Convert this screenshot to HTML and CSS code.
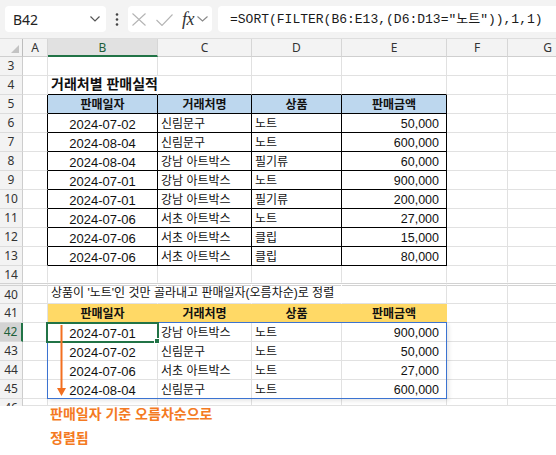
FILE: index.html
```html
<!DOCTYPE html>
<html lang="ko">
<head>
<meta charset="utf-8">
<title>SORT FILTER</title>
<link rel="stylesheet" href="styles.css">
</head>
<body>
<div class="app">
  <div class="toolbar">
    <div class="namebox">
      <span>B42</span>
      <svg class="chev" width="10" height="6" viewBox="0 0 10 6"><polyline points="0.5,0.5 5,5 9.5,0.5" fill="none" stroke="#555" stroke-width="1.2"/></svg>
    </div>
    <div class="more">
      <svg width="4" height="13" viewBox="0 0 4 13"><circle cx="2" cy="1.5" r="1.3" fill="#444"/><circle cx="2" cy="6.5" r="1.3" fill="#444"/><circle cx="2" cy="11.5" r="1.3" fill="#444"/></svg>
    </div>
    <div class="fxbox">
      <svg class="x" width="14" height="13" viewBox="0 0 14 13"><path d="M0.5,0.5 L13.5,12.5 M13.5,0.5 L0.5,12.5" stroke="#b4b4b4" stroke-width="1.1" fill="none"/></svg>
      <svg class="ok" width="17" height="12" viewBox="0 0 17 12"><polyline points="0.5,6 6,11.5 16.5,0.5" stroke="#b4b4b4" stroke-width="1.1" fill="none"/></svg>
      <span class="fx">fx</span>
      <svg class="chev2" width="11" height="6" viewBox="0 0 11 6"><polyline points="0.5,0.5 5.5,5 10.5,0.5" fill="none" stroke="#888" stroke-width="1.1"/></svg>
    </div>
    <div class="formula">=SORT(FILTER(B6:E13,(D6:D13="노트")),1,1)</div>
  </div>

  <div class="sheet">
    <div class="corner"><i class="tri"></i></div>
    <div class="ch">A</div><div class="ch sel">B</div><div class="ch">C</div><div class="ch">D</div><div class="ch">E</div><div class="ch">F</div><div class="ch">G</div>

    <div class="rh">3</div><div class="c"></div><div class="c"></div><div class="c"></div><div class="c"></div><div class="c"></div><div class="c"></div><div class="c"></div>

    <div class="rh">4</div><div class="c"></div><div class="c bt nr title">거래처별 판매실적</div><div class="c bt"></div><div class="c bt"></div><div class="c bt"></div><div class="c"></div><div class="c"></div>

    <div class="rh">5</div><div class="c bl"></div><div class="c bk hb">판매일자</div><div class="c bk hb">거래처명</div><div class="c bk hb">상품</div><div class="c bk hb">판매금액</div><div class="c"></div><div class="c"></div>

    <div class="rh">6</div><div class="c bl"></div><div class="c bk date">2024-07-02</div><div class="c bk">신림문구</div><div class="c bk">노트</div><div class="c bk num">50,000</div><div class="c"></div><div class="c"></div>
    <div class="rh">7</div><div class="c bl"></div><div class="c bk date">2024-08-04</div><div class="c bk">신림문구</div><div class="c bk">노트</div><div class="c bk num">600,000</div><div class="c"></div><div class="c"></div>
    <div class="rh">8</div><div class="c bl"></div><div class="c bk date">2024-08-04</div><div class="c bk">강남 아트박스</div><div class="c bk">필기류</div><div class="c bk num">60,000</div><div class="c"></div><div class="c"></div>
    <div class="rh">9</div><div class="c bl"></div><div class="c bk date">2024-07-01</div><div class="c bk">강남 아트박스</div><div class="c bk">노트</div><div class="c bk num">900,000</div><div class="c"></div><div class="c"></div>
    <div class="rh">10</div><div class="c bl"></div><div class="c bk date">2024-07-01</div><div class="c bk">강남 아트박스</div><div class="c bk">필기류</div><div class="c bk num">200,000</div><div class="c"></div><div class="c"></div>
    <div class="rh">11</div><div class="c bl"></div><div class="c bk date">2024-07-06</div><div class="c bk">서초 아트박스</div><div class="c bk">노트</div><div class="c bk num">27,000</div><div class="c"></div><div class="c"></div>
    <div class="rh">12</div><div class="c bl"></div><div class="c bk date">2024-07-06</div><div class="c bk">서초 아트박스</div><div class="c bk">클립</div><div class="c bk num">15,000</div><div class="c"></div><div class="c"></div>
    <div class="rh">13</div><div class="c bl"></div><div class="c bk date">2024-07-06</div><div class="c bk">서초 아트박스</div><div class="c bk">클립</div><div class="c bk num">80,000</div><div class="c"></div><div class="c"></div>

    <div class="rh nb">14</div><div class="c nb"></div><div class="c nb"></div><div class="c nb"></div><div class="c nb"></div><div class="c nb"></div><div class="c nb"></div><div class="c nb"></div>

    <div class="rh dbl">40</div><div class="c dbl"></div><div class="c dbl nr">상품이 '노트'인 것만 골라내고 판매일자(오름차순)로 정렬</div><div class="c dbl nr"></div><div class="c dbl nr"></div><div class="c dbl"></div><div class="c dbl"></div><div class="c dbl"></div>

    <div class="rh">41</div><div class="c"></div><div class="c hy">판매일자</div><div class="c hy">거래처명</div><div class="c hy">상품</div><div class="c hy">판매금액</div><div class="c"></div><div class="c"></div>

    <div class="rh sel">42</div><div class="c"></div><div class="c date">2024-07-01</div><div class="c">강남 아트박스</div><div class="c">노트</div><div class="c num">900,000</div><div class="c"></div><div class="c"></div>
    <div class="rh">43</div><div class="c"></div><div class="c date">2024-07-02</div><div class="c">신림문구</div><div class="c">노트</div><div class="c num">50,000</div><div class="c"></div><div class="c"></div>
    <div class="rh">44</div><div class="c"></div><div class="c date">2024-07-06</div><div class="c">서초 아트박스</div><div class="c">노트</div><div class="c num">27,000</div><div class="c"></div><div class="c"></div>
    <div class="rh">45</div><div class="c"></div><div class="c date">2024-08-04</div><div class="c">신림문구</div><div class="c">노트</div><div class="c num">600,000</div><div class="c"></div><div class="c"></div>

    <div class="rh last">46</div><div class="c"></div><div class="c"></div><div class="c"></div><div class="c"></div><div class="c"></div><div class="c"></div><div class="c"></div>

    <div class="spill"></div>
    <div class="active"></div>
    <div class="handle"></div>
    <svg class="arrow" width="11" height="72" viewBox="0 0 11 72"><line x1="5.5" y1="0" x2="5.5" y2="64" stroke="#f26f1f" stroke-width="2"/><polygon points="1,63 10,63 5.5,71" fill="#f26f1f"/></svg>
  </div>

  <div class="note">
    <div>판매일자 기준 오름차순으로</div>
    <div>정렬됨</div>
  </div>
</div>
</body>
</html>
```

FILE: styles.css
```css
html, body {
  margin: 0;
  padding: 0;
  background: #ffffff;
}

body {
  font-family: "Liberation Sans", "Noto Sans CJK KR", sans-serif;
  color: #111;
}

.app {
  width: 556px;
  height: 455px;
  overflow: hidden;
  background: #fff;
}

/* ---------- toolbar ---------- */
.toolbar {
  height: 39px;
  box-sizing: border-box;
  background: #f3f3f3;
  border-bottom: 1px solid #dedede;
  display: flex;
  align-items: flex-start;
  padding: 6px 0 0 5px;
}

.namebox {
  width: 101px;
  height: 26px;
  box-sizing: border-box;
  background: #fff;
  border-radius: 4px;
  display: flex;
  align-items: center;
  justify-content: space-between;
  padding: 0 6px 0 8px;
  font-family: "Noto Sans", sans-serif;
  font-size: 14px;
  color: #222;
}

.more {
  width: 22px;
  height: 26px;
  display: flex;
  align-items: center;
  justify-content: center;
}

.fxbox {
  width: 84px;
  height: 26px;
  box-sizing: border-box;
  background: #fff;
  border-radius: 4px;
  display: flex;
  align-items: center;
  padding-left: 4px;
}

.fxbox .x { margin-top: 1px; }
.fxbox .ok { margin-left: 10px; margin-top: 1px; }

.fx {
  margin-left: 9px;
  font-family: "Liberation Serif", serif;
  font-style: italic;
  font-size: 18px;
  line-height: 20px;
  color: #333;
  letter-spacing: -0.5px;
}

.fxbox .chev2 { margin-left: 3px; }

.formula {
  flex: 1;
  margin-left: 6px;
  height: 26px;
  box-sizing: border-box;
  background: #fff;
  border-radius: 4px 0 0 4px;
  padding: 3px 0 0 12px;
  font-family: "Liberation Mono", "Noto Sans CJK KR", monospace;
  font-size: 13px;
  line-height: 22px;
  color: #1a1a1a;
  white-space: nowrap;
}

/* ---------- sheet grid ---------- */
.sheet {
  position: relative;
  display: grid;
  grid-template-columns: 23px 25px 110px 94px 90px 105px 61px 80px;
  grid-template-rows: 18px repeat(11, 19px) 17px 21px repeat(5, 19px) 7px;
  width: 588px;
}

.sheet > div {
  box-sizing: border-box;
  min-width: 0;
}

.corner {
  background: #f3f3f3;
  border-right: 1px solid #bdbdbd;
  border-bottom: 1px solid #cfcfcf;
  display: flex;
  align-items: flex-end;
  justify-content: flex-end;
  padding: 0 3px 3px 0;
}

.tri {
  display: block;
  width: 0;
  height: 0;
  border-left: 8px solid transparent;
  border-bottom: 8px solid #c3c3c3;
}

.ch {
  background: #f3f3f3;
  border-right: 1px solid #d6d6d6;
  border-bottom: 1px solid #cfcfcf;
  font-family: "Noto Sans", sans-serif;
  font-size: 12px;
  line-height: 17px;
  text-align: center;
  color: #333;
}

.ch.sel {
  background: #e1e1e1;
  border-bottom: 2px solid #217346;
  color: #1d5e39;
}

.rh {
  background: #f3f3f3;
  border-right: 1px solid #cdcdcd;
  border-bottom: 1px solid #dcdcdc;
  font-family: "Noto Sans", sans-serif;
  font-size: 12px;
  line-height: 18px;
  text-align: center;
  color: #333;
  overflow: hidden;
}

.rh.sel {
  background: #d3d3d3;
  border-right: 2px solid #217346;
  color: #1d5e39;
}

.rh.last {
  border-bottom: none;
}

.c {
  border-right: 1px solid #e1e1e1;
  border-bottom: 1px solid #e1e1e1;
  padding: 3px 3px 0 3px;
  font-size: 12px;
  line-height: 15px;
  white-space: nowrap;
  overflow: visible;
  color: #111;
}

.nb { border-bottom-color: transparent !important; }

.dbl {
  border-top: 3px double #d2d2d2;
}

.c.dbl { padding-top: 0; }
.rh.dbl { line-height: 17px; }

.date {
  text-align: center;
  font-size: 13px;
}

.num {
  text-align: right;
  padding-right: 7px;
  font-size: 12.5px;
}

.title {
  font-weight: bold;
  font-size: 14px;
  padding-top: 1px;
}

.bk {
  border-right-color: #000;
  border-bottom-color: #000;
}

.bl { border-right-color: #000; }
.bt { border-bottom-color: #000; }
.nr { border-right-color: transparent; }

.hb {
  background: #bdd7ee;
  font-weight: bold;
  text-align: center;
}

.hy {
  background: #ffd966;
  font-weight: bold;
  text-align: center;
  border-right-color: #ffd966;
}

/* ---------- overlays ---------- */
.spill {
  position: absolute;
  left: 47px;
  top: 283px;
  width: 400px;
  height: 77px;
  box-sizing: border-box;
  border: 1px solid #3b73d1;
  box-shadow: 2px 2px 4px rgba(0, 0, 0, 0.10);
  pointer-events: none;
}

.active {
  position: absolute;
  left: 46px;
  top: 283px;
  width: 113px;
  height: 21px;
  box-sizing: border-box;
  border: 2px solid #217346;
}

.handle {
  position: absolute;
  left: 154px;
  top: 299px;
  width: 6px;
  height: 6px;
  box-sizing: border-box;
  background: #217346;
  border: 1px solid #fff;
}

.arrow {
  position: absolute;
  left: 56px;
  top: 286px;
}

/* ---------- annotation ---------- */
.note {
  display: flex;
  flex-direction: column;
  gap: 10px;
  padding-left: 50px;
  font-family: "Noto Sans CJK KR", sans-serif;
  font-weight: bold;
  font-size: 14px;
  line-height: 14px;
  color: #f47a22;
}
```
